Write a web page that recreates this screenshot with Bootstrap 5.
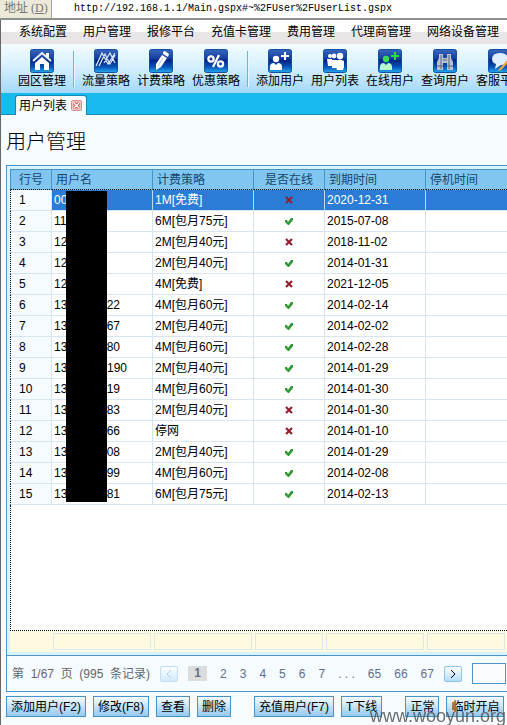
<!DOCTYPE html>
<html lang="zh-CN">
<head>
<meta charset="utf-8">
<meta name="viewport" content="width=device-width, initial-scale=1">
<title>用户管理</title>
<link href="https://cdn.jsdelivr.net/npm/bootstrap@5.3.0/dist/css/bootstrap.min.css" rel="stylesheet">
<style>
  body { font: 12px/16px "Liberation Sans", "Noto Sans CJK SC", sans-serif; color: #000; background: #f5fbff; overflow: hidden; }
  a { color: inherit; text-decoration: none; }
  .addr { height: 20px; background: #fff; border-bottom: 2px solid #8b908f; }
  .addr label { width: 52px; padding-left: 4px; background: #ece9d8; color: #777; border-right: 1px solid #aaa; font: 12px/16px "Liberation Serif", "Noto Sans CJK SC", serif; white-space: nowrap; }
  .addr input { padding: 0 0 0 22px; font: 10px/18px "Liberation Mono", monospace; }
  .shell { border-left: 1px solid #666; }
  .menu-strip { height: 24px; gap: 16px; padding-left: 18px; background: linear-gradient(#fff 0 12px, #e7e5e6 12px); }
  .nowrap-row { display: flex; align-items: center; white-space: nowrap; }
  .nowrap-row > * { flex-shrink: 0; }
  .tools { height: 49px; gap: 7px; padding-left: 17px; background: linear-gradient(#f4fcff, #d2effd 50%, #a3d8f9); }
  .tools a { display: flex; flex-direction: column; align-items: center; width: 48px; }
  .tools svg { width: 24px; height: 24px; }
  .tools .divider { width: 2px; height: 36px; background: #63b9e2; border-right: 1px solid #e8f8ff; }
  .tabs { height: 22px; padding-left: 14px; background: #18bbee; border-bottom: 1px solid #1688b4; }
  .tab-item { height: 20px; margin-bottom: -1px; padding: 0 4px 0 3px; gap: 4px; background: #f5fbff; border: 1px solid #1688b4; border-bottom: 0; border-radius: 3px 3px 0 0; }
  .tab-item button { width: 11px; height: 11px; }
  .tab-item svg, .check-mark { display: block; }
  h1 { font-size: 20px; line-height: 30px; font-weight: 300; padding: 12px 0 8px 5px; margin: 0; }
  .panel { margin-left: 5px; border: 1px solid #4b94c4; border-right: 0; }
  .grid-box { padding: 3px 0 3px 3px; background: #d8f2fe; }
  .user-grid { width: 100%; table-layout: fixed; border-collapse: separate; border-spacing: 0; background: #fff; white-space: nowrap; }
  .user-grid th { height: 21px; padding: 0 4px; font-weight: 400; color: #16476f; background: #80c6f0; border: 0 solid #4594c8; border-width: 1px 1px 0 0; border-bottom: 1px dotted #000; }
  .user-grid tbody td { height: 21px; padding: 0 2px; line-height: 16px; border-right: 1px solid #d6e5ee; border-bottom: 1px solid #d6e5ee; overflow: hidden; }
  .user-grid tbody td:first-child { padding-left: 8px; background: #f5fbff; border-left: 1px dotted #000; }
  .user-grid th:first-child { padding-left: 8px; border-left: 1px solid #4594c8; }
  .user-grid th:last-child, .user-grid tbody td:last-child { border-right: 0; }
  .user-grid tbody td.blank-area { height: 126px; background: #fff; border-bottom: 1px dotted #000; }
  .user-grid .chosen td:not(:first-child) { background: #2b7cd7; color: #fff; border-right-color: #b9dcf5; }
  .user-grid tfoot td { height: 21px; padding: 2px 2px 2px 1px; background: #fdfae0; }
  .user-grid tfoot input { display: block; width: 100%; height: 17px; background: transparent; border: 1px solid #dde8ec; }
  .c-no { width: 42px; } .c-wide { width: 101px; } .c-on { width: 71px; }
  .acct { display: flex; justify-content: space-between; width: 66px; }
  .acct.long { width: 73px; }
  .check-mark { width: 8px; height: 8px; margin: 0 auto; }
  .censor { left: 59px; top: 25px; width: 41px; height: 311px; background: #000; }
  .pager { height: 36px; padding-left: 5px; gap: 10px; color: #666; border-top: 1px solid #4b94c4; }
  .pages { gap: 13px; color: #60708a; }
  .pages .now { width: 19px; line-height: 15px; text-align: center; background: #ddd; font-weight: 700; }
  .step { width: 18px; height: 16px; border: 1px solid #8fc4e4; border-radius: 2px; padding: 0; background: linear-gradient(#fff, #b4dcf8); display: flex; align-items: center; justify-content: center; color: #000; }
  .step:disabled { opacity: .5; color: #5aa8d8; }
  .pager input { width: 34px; height: 21px; background: #f9fdff; border: 1px solid #4b94c4; }
  .acts { gap: 7px; padding: 4px 0 8px 5px; }
  .acts button { height: 21px; padding: 0 4px; line-height: 16px; color: #000; border: 1px solid #4594c8; background: linear-gradient(#f4fbff, #cfe8fa 40%, #94c9f0); }
  .acts .group { margin-left: 16px; }
  .stamp { position: fixed; right: 1px; bottom: -1px; font: 18px/20px "Liberation Sans", sans-serif; color: #555; opacity: .85; pointer-events: none; }
</style>
<script src="https://cdn.jsdelivr.net/npm/bootstrap@5.3.0/dist/js/bootstrap.bundle.min.js"></script>
</head>
<body>
<svg width="0" height="0" class="position-absolute" aria-hidden="true">
  <defs>
    <linearGradient id="blue" x1="0" y1="0" x2="0" y2="1"><stop offset="0" stop-color="#3867bd"/><stop offset=".42" stop-color="#123c9c"/><stop offset=".45" stop-color="#02207f"/><stop offset=".75" stop-color="#0752b8"/><stop offset="1" stop-color="#25aaf0"/></linearGradient>
    <symbol id="tile" viewBox="0 0 24 24"><rect x=".5" y=".5" width="23" height="23" rx="2" fill="url(#blue)" stroke="#1450a0"/></symbol>
    <symbol id="yes" viewBox="0 0 8 8"><path d="M0 3h2l1 2 3-4h2v2L4 8H3L0 5z" fill="#2f9a35"/></symbol>
    <symbol id="no" viewBox="0 0 8 8"><path d="M1 1l6 6M7 1L1 7" fill="none" stroke="#962030" stroke-width="2.2"/></symbol>
  </defs>
</svg>

<div class="addr d-flex">
  <label for="address">地址 (<u>D</u>)</label>
  <input id="address" class="flex-grow-1 border-0 bg-white" type="text" value="http://192.168.1.1/Main.gspx#~%2FUser%2FUserList.gspx">
</div>

<div class="shell">
  <nav class="menu-strip nowrap-row" aria-label="主菜单">
    <a href="#">系统配置</a><a href="#">用户管理</a><a href="#">报修平台</a><a href="#">充值卡管理</a><a href="#">费用管理</a><a href="#">代理商管理</a><a href="#">网络设备管理</a>
  </nav>

  <div class="tools nowrap-row">
    <a href="#"><svg viewBox="0 0 24 24"><use href="#tile"/><path d="M3 12 12 4l9 8" fill="none" stroke="#e8f1ff" stroke-width="2"/><path d="M16 4h3v5l-3-2zM12 8l7 6v7h-5v-6h-4v6H5v-7z" fill="#fff"/></svg>园区管理</a>
    <span class="divider"></span>
    <a href="#"><svg viewBox="0 0 24 24"><use href="#tile"/><path d="M2 17 8 4l6 11 7-11M5 17 11 5l5 10 5-9M10 14l6-10 5 10" fill="none" stroke="#dbe9ff" stroke-width="1.2"/></svg>流量策略</a>
    <a href="#"><svg viewBox="0 0 24 24"><use href="#tile"/><path d="m14 3 2-1 4 3-1 3-5-3zM13 6l5 3-6 9-5 3V15z" fill="#fff"/><path d="m14 9-5 8" stroke="#b7cbed"/></svg>计费策略</a>
    <a href="#"><svg viewBox="0 0 24 24"><use href="#tile"/><g fill="none" stroke="#fff" stroke-width="2.3"><circle cx="7" cy="10" r="2.6"/><circle cx="16.5" cy="15" r="2.6"/><path d="M15 6 9 18"/></g></svg>优惠策略</a>
    <span class="divider"></span>
    <a href="#"><svg viewBox="0 0 24 24"><use href="#tile"/><g fill="#fff"><circle cx="8" cy="10" r="3.2"/><path d="M2 21v-3q0-4 4-4l2 2 2-2q4 0 4 4v3zM16 3h2v3h3v2h-3v3h-2V8h-3V6h3z"/></g></svg>添加用户</a>
    <a href="#"><svg viewBox="0 0 24 24"><use href="#tile"/><g fill="#fff"><circle cx="7" cy="7" r="2"/><circle cx="11" cy="7" r="2.4"/><circle cx="17" cy="7" r="3.2"/><path d="M4 10h5v7H5zM9 11h5v8H9zM13 12q4-3 8 0v6l-1 3h-6l-1-3z"/></g></svg>用户列表</a>
    <a href="#"><svg viewBox="0 0 24 24"><use href="#tile"/><circle cx="8" cy="10" r="3.2" fill="#38dc58"/><path d="M2 21v-3q0-4 4-4l2 2 2-2q4 0 4 4v3z" fill="#b9f5cf"/><path d="M16 3h2v3h3v2h-3v3h-2V8h-3V6h3z" fill="#20e43c"/></svg>在线用户</a>
    <a href="#"><svg viewBox="0 0 24 24"><use href="#tile"/><g fill="#b9c2cf"><path d="M6 5h4v4h4V5h4v4l2 4v8h-6v-7h-4v7H4v-8l2-4z"/></g><path d="M8 6v14M16 6v14M4 17h6M14 17h6M10 11h4" stroke="#56657c"/></svg>查询用户</a>
    <a href="#"><svg viewBox="0 0 24 24"><use href="#tile"/><path d="M4 10q0-6 8-6t8 6-7 6l-6 4 1-5q-4-1-4-5" fill="#dceeff"/><path d="M21 9 11 20l-1 2 3-1L23 11z" fill="#f0a63b"/></svg>客服平台</a>
  </div>

  <div class="tabs d-flex align-items-end">
    <div class="tab-item d-flex align-items-center"><a href="#">用户列表</a>
      <button type="button" class="border-0 p-0 bg-transparent" aria-label="关闭"><svg viewBox="0 0 11 11"><rect x=".5" y=".5" width="10" height="10" rx="1" fill="#f4c4c4" stroke="#d98c8c"/><path d="m3 3 5 5m0-5L3 8" stroke="#c33" stroke-width="3"/><path d="m3 3 5 5m0-5L3 8" stroke="#fff" stroke-width="1.5"/></svg></button>
    </div>
  </div>

  <h1>用户管理</h1>

  <div class="panel position-relative">
    <div class="grid-box">
      <table class="user-grid">
        <colgroup><col class="c-no"><col class="c-wide"><col class="c-wide"><col class="c-on"><col class="c-wide"><col></colgroup>
        <thead><tr><th>行号</th><th>用户名</th><th>计费策略</th><th class="text-center">是否在线</th><th>到期时间</th><th>停机时间</th></tr></thead>
        <tbody id="rows"></tbody>
        <tfoot><tr><td></td><td><input type="text" aria-label="用户名筛选"></td><td><input type="text" aria-label="计费策略筛选"></td><td><input type="text" aria-label="在线筛选"></td><td><input type="text" aria-label="到期时间筛选"></td><td><input type="text" aria-label="停机时间筛选"></td></tr></tfoot>
      </table>
    </div>
    <div class="censor position-absolute"></div>
    <div class="pager nowrap-row">
      <span>第&nbsp; 1/67&nbsp; 页&nbsp; (995&nbsp; 条记录)</span>
      <button class="step" type="button" disabled aria-label="上一页"><svg width="6" height="8" viewBox="0 0 6 8"><path d="M5 0 1 4l4 4" fill="none" stroke="currentColor"/></svg></button>
      <div class="pages nowrap-row"><a class="now" href="#">1</a><a href="#">2</a><a href="#">3</a><a href="#">4</a><a href="#">5</a><a href="#">6</a><a href="#">7</a><span>. . .</span><a href="#">65</a><a href="#">66</a><a href="#">67</a></div>
      <button class="step" type="button" aria-label="下一页"><svg width="6" height="8" viewBox="0 0 6 8"><path d="m1 0 4 4-4 4" fill="none" stroke="currentColor"/></svg></button>
      <input type="text" aria-label="页码">
    </div>
  </div>

  <div class="acts nowrap-row">
    <button type="button">添加用户(F2)</button><button type="button">修改(F8)</button><button type="button">查看</button><button type="button">删除</button>
    <button type="button" class="group">充值用户(F7)</button><button type="button">T下线</button>
    <button type="button" class="group">正常</button><button type="button">临时开启</button>
  </div>
</div>
<div class="stamp">www.wooyun.org</div>

<script>
  const users = [
    ["00", "", "1M[免费]", 0, "2020-12-31"],
    ["11", "", "6M[包月75元]", 1, "2015-07-08"],
    ["12", "", "2M[包月40元]", 0, "2018-11-02"],
    ["12", "", "2M[包月40元]", 1, "2014-01-31"],
    ["12", "", "4M[免费]", 0, "2021-12-05"],
    ["13", "22", "4M[包月60元]", 1, "2014-02-14"],
    ["13", "567", "2M[包月40元]", 1, "2014-02-02"],
    ["13", "080", "4M[包月60元]", 1, "2014-02-28"],
    ["13", "190", "2M[包月40元]", 1, "2014-01-29"],
    ["13", "519", "4M[包月60元]", 1, "2014-01-30"],
    ["13", "83", "2M[包月40元]", 0, "2014-01-30"],
    ["13", "066", "停网", 0, "2014-01-10"],
    ["13", "008", "2M[包月40元]", 1, "2014-01-29"],
    ["13", "299", "4M[包月60元]", 1, "2014-02-08"],
    ["13", "781", "6M[包月75元]", 1, "2014-02-13"]
  ];
  document.getElementById("rows").innerHTML = users.map(([head, tail, plan, on, due], i) =>
    `<tr class="${i ? "" : "chosen"}"><td>${i + 1}</td><td><span class="acct ${tail === "190" ? "long" : ""}"><span>${head}</span><span>${tail}</span></span></td><td>${plan}</td><td><svg class="check-mark" role="img" aria-label="${on ? "在线" : "离线"}"><use href="#${on ? "yes" : "no"}"/></svg></td><td>${due}</td><td></td></tr>`
  ).join("") + '<tr><td class="blank-area" colspan="6"></td></tr>';
</script>
</body>
</html>
